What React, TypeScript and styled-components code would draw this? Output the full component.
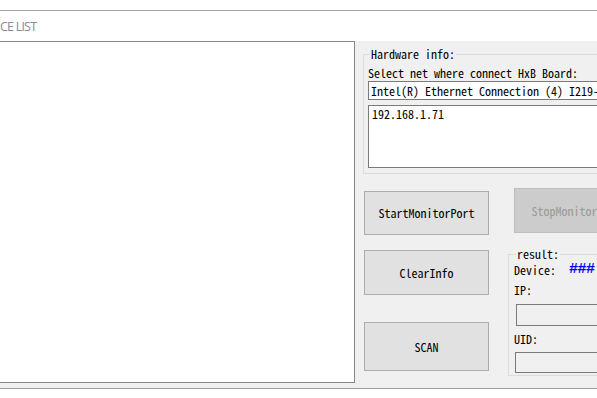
import React from 'react';
import styled, {createGlobalStyle, css} from 'styled-components';

const GlobalStyle = createGlobalStyle`
  html, body {
    margin: 0;
    padding: 0;
    background: #ffffff;
  }
`;

const dialogFont = css`
  font-family: "Noto Sans Mono CJK SC", "Liberation Mono", monospace;
  font-size: 12px;
  line-height: 14px;
  color: #000000;
`;

const Window = styled.div`
  width: 100vw;
  height: 100vh;
  overflow: hidden;
  background: #ffffff;
`;

const Header = styled.div`
  padding-top: 10px;
`;

const TitleBar = styled.div`
  display: flex;
  align-items: center;
  height: 30px;
  border-top: 1px solid #a0a0a0;
`;

const Title = styled.span`
  font-family: "Open Sans", "Liberation Sans", sans-serif;
  font-size: 12.5px;
  letter-spacing: -0.8px;
  color: #8a8a9c;
`;

const Main = styled.div`
  display: flex;
  height: 347px;
  background: #f0f0f0;
  border-bottom: 1px solid #a0a0a0;
`;

const ListBox = styled.div`
  flex: 0 0 auto;
  box-sizing: border-box;
  width: 355px;
  height: 342px;
  background: #ffffff;
  border: 1px solid #828790;
  border-left: none;
`;

const Side = styled.div`
  flex: 0 0 auto;
  width: 320px;
  padding-left: 8px;
  display: flex;
  flex-direction: column;
`;

const GroupBox = styled.fieldset<{width: number; bottom: number}>`
  ${dialogFont};
  box-sizing: border-box;
  min-width: 0;
  width: ${({width}) => width}px;
  margin: 0;
  padding: 0 0 ${({bottom}) => bottom}px 4px;
  border: 1px solid #dcdcdc;
  border-right: none;
  display: flex;
  flex-direction: column;
`;

const Legend = styled.legend`
  ${dialogFont};
  padding: 0 1px;
  margin-left: 2px;
`;

const Label = styled.div<{top: number}>`
  ${dialogFont};
  margin-top: ${({top}) => top}px;
  white-space: nowrap;
`;

const Combo = styled.div`
  ${dialogFont};
  box-sizing: border-box;
  height: 19px;
  margin-top: 1px;
  padding: 2px 0 0 2px;
  background: #ffffff;
  border: 1px solid #7a7a7a;
  border-right: none;
  white-space: nowrap;
`;

const TextArea = styled.div`
  ${dialogFont};
  box-sizing: border-box;
  height: 63px;
  margin-top: 5px;
  padding: 1px 0 0 3px;
  background: #ffffff;
  border: 1px solid #7a7a7a;
  border-right: none;
`;

const Controls = styled.div`
  display: flex;
  margin-top: 14px;
`;

const Column = styled.div<{left: number; top: number}>`
  display: flex;
  flex-direction: column;
  margin-left: ${({left}) => left}px;
  padding-top: ${({top}) => top}px;
`;

const Button = styled.div<{height: number; gap?: number; disabled?: boolean}>`
  ${dialogFont};
  box-sizing: border-box;
  display: flex;
  align-items: center;
  justify-content: center;
  flex: 0 0 auto;
  width: 125px;
  height: ${({height}) => height}px;
  margin-top: ${({gap}) => gap ?? 0}px;
  background: ${({disabled}) => disabled ? '#cccccc' : '#e1e1e1'};
  border: 1px solid ${({disabled}) => disabled ? '#bfbfbf' : '#adadad'};
  color: ${({disabled}) => disabled ? '#9a9a9a' : '#000000'};
  white-space: nowrap;
`;

const ResultGroup = styled(GroupBox)`
  margin: 14px 0 0 -6px;
  padding-left: 5px;
`;

const DeviceRow = styled.div`
  display: flex;
  align-items: center;
  margin-top: 2px;
  height: 14px;
`;

const DeviceValue = styled.span`
  font-family: "Liberation Mono", monospace;
  font-size: 15px;
  font-weight: bold;
  color: #0000ff;
  margin-left: 13px;
  letter-spacing: -0.5px;
`;

const Field = styled.div<{top: number; height: number; left: number}>`
  box-sizing: border-box;
  height: ${({height}) => height}px;
  margin-top: ${({top}) => top}px;
  margin-left: ${({left}) => left}px;
  background: #f0f0f0;
  border: 1px solid #7a7a7a;
  border-right: none;
`;

export default function App() {
  return (
    <Window>
      <GlobalStyle />
      <Header>
        <TitleBar>
          <Title>CE LIST</Title>
        </TitleBar>
      </Header>
      <Main>
        <ListBox />
        <Side>
          <GroupBox width={300} bottom={5} style={{marginTop: 6}}>
            <Legend>Hardware info:</Legend>
            <Label top={5}>Select net where connect HxB Board:</Label>
            <Combo>Intel(R) Ethernet Connection (4) I219-V</Combo>
            <TextArea>192.168.1.71</TextArea>
          </GroupBox>
          <Controls>
            <Column left={1} top={3}>
              <Button height={44}>StartMonitorPort</Button>
              <Button height={45} gap={15}>ClearInfo</Button>
              <Button height={49} gap={27}>SCAN</Button>
            </Column>
            <Column left={25} top={0}>
              <Button height={45} disabled>StopMonitorPort</Button>
              <ResultGroup width={200} bottom={2}>
                <Legend>result:</Legend>
                <DeviceRow>
                  Device:
                  <DeviceValue>###</DeviceValue>
                </DeviceRow>
                <Label top={6}>IP:</Label>
                <Field top={7} height={22} left={2} />
                <Label top={6}>UID:</Label>
                <Field top={6} height={21} left={1} />
              </ResultGroup>
            </Column>
          </Controls>
        </Side>
      </Main>
    </Window>
  );
}
